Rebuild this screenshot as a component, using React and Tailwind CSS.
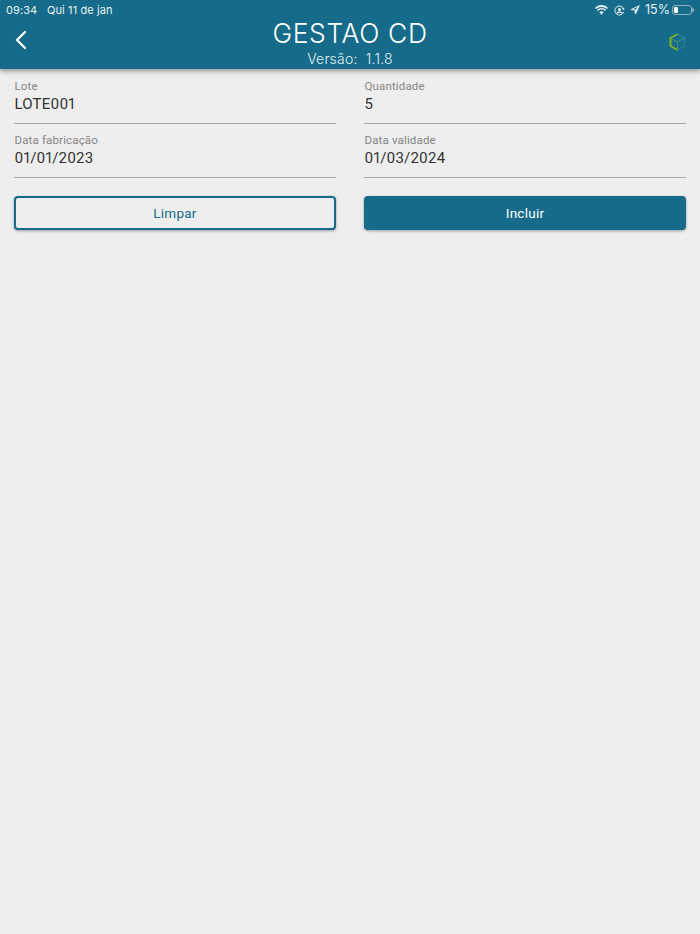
import React from 'react';

const Field = ({ label, value }) => (
  <div className="h-[54px] border-b border-[#a6a6a6] pt-[9px] pl-[0.5px]">
    <p className="text-[11.5px] leading-[14px] tracking-[0.15px] text-[#858585]">{label}</p>
    <p className="text-[15px] leading-[22px] tracking-[0.2px] text-[#333333] proportional-nums">{value}</p>
  </div>
);

const StatusIcons = () => (
  <div className="flex items-center text-[#e8f1f4]">
    <svg width="13" height="10" viewBox="0 0 13 10" fill="currentColor" className="mr-[6px]">
      <path d="M6.5 2C8.6 2 10.5 2.8 11.9 4.1L13 3C11.3 1.2 9 0 6.5 0S1.7 1.2 0 3L1.1 4.1C2.5 2.8 4.4 2 6.5 2Z" />
      <path d="M6.5 4.6C7.8 4.6 9 5.1 9.9 6L11 4.9C9.8 3.7 8.2 3 6.5 3S3.2 3.7 2 4.9L3.1 6C4 5.1 5.2 4.6 6.5 4.6Z" />
      <path d="M6.5 6.2C5.7 6.2 5 6.5 4.3 7.1L6.5 9.7L8.7 7.1C8 6.5 7.3 6.2 6.5 6.2Z" />
    </svg>
    <svg width="11" height="11" viewBox="0 0 11 11" fill="none" stroke="currentColor" className="mr-[5px]">
      <path d="M9.7 6.8A4.5 4.5 0 1 1 9.7 4.2" strokeWidth="1" />
      <path d="M10.5 2.5L9.8 5L7.8 3.8Z" fill="currentColor" stroke="none" />
      <circle cx="5.5" cy="4.5" r="1.5" fill="currentColor" stroke="none" />
      <path d="M2.8 8.2C3.4 6.8 7.6 6.8 8.2 8.2" strokeWidth="1.2" />
    </svg>
    <svg width="10" height="10" viewBox="0 0 10 10" fill="none" stroke="currentColor" strokeWidth="1" className="mr-[5px]">
      <path d="M9.2 0.8L1 4.6L5 5L5.4 9Z" strokeLinejoin="round" />
      <path d="M9.2 0.8L5 5L5.4 9Z" fill="currentColor" stroke="none" />
    </svg>
    <span className="mr-[2px] text-[12.5px] leading-none">15%</span>
    <div className="relative h-[10px] w-[20px] rounded-[3px] border border-[#8fb1bf] p-[1px]">
      <div className="h-full w-[4px] rounded-[1px] bg-white"></div>
      <div className="absolute -right-[3px] top-[2px] h-[4px] w-[2px] rounded-r-sm bg-[#8fb1bf]"></div>
    </div>
  </div>
);

const App = () => {
  return (
    <div className="flex min-h-[934px] flex-col bg-[#eeeeee] font-['Roboto',sans-serif]">
      <header className="h-[69px] bg-[#156b89] shadow-[0_2px_5px_rgba(0,0,0,0.4)]">
        <div className="flex h-[20px] items-center justify-between pl-[6px] pr-[8px] font-['Inter',sans-serif] text-[#e8f1f4]">
          <div className="flex items-center text-[11px] tracking-[0.1px]">
            <span className="w-[41px]">09:34</span>
            <span>Qui 11 de jan</span>
          </div>
          <StatusIcons />
        </div>

        <div className="grid grid-cols-[1fr_auto_1fr] items-start">
          <div className="pl-[14px] pt-[10px]">
            <svg width="13" height="20" viewBox="0 0 13 20" fill="none" stroke="white" strokeWidth="2.2">
              <path d="M11 2L3 10L11 18" strokeLinecap="round" strokeLinejoin="round" />
            </svg>
          </div>
          <div className="-mt-[3px] text-center font-['Inter',sans-serif] text-white">
            <h1 className="text-[26.5px] font-[350] leading-[32px] tracking-[0.6px]">GESTAO CD</h1>
            <p className="text-[14px] font-[350] leading-[20px] tracking-[0.2px] text-[#e4f0f4]">Versão:&nbsp; 1.1.8</p>
          </div>
          <div className="flex justify-end pr-[14px] pt-[13px]">
            <svg width="17" height="18" viewBox="0 0 17 18" fill="none">
              <path d="M8.5 1L15.5 5V13L8.5 17" stroke="#2b7f9c" strokeWidth="1.3" />
              <path d="M8.5 1L1.5 5V13L8.5 17" stroke="#7fb321" strokeWidth="2" />
              <path d="M3 6L8.5 9L15.5 5M8.5 9V16" stroke="#3f8f70" strokeWidth="1.1" />
            </svg>
          </div>
        </div>
      </header>

      <main className="px-[14px] pt-[1px]">
        <div className="grid grid-cols-2 gap-x-[28px]">
          <Field label="Lote" value="LOTE001" />
          <Field label="Quantidade" value="5" />
          <Field label="Data fabricação" value="01/01/2023" />
          <Field label="Data validade" value="01/03/2024" />
        </div>

        <div className="mt-[18px] grid grid-cols-2 gap-x-[28px] text-[13.5px] font-[450] tracking-[0.25px]">
          <button className="h-[34px] rounded-[4px] border-2 border-[#156b89] bg-[#eeeeee] text-[#156b89] shadow-[0_1px_3px_rgba(0,0,0,0.35)]">
            Limpar
          </button>
          <button className="h-[34px] rounded-[4px] bg-[#156b89] text-white shadow-[0_1px_3px_rgba(0,0,0,0.35)]">
            Incluir
          </button>
        </div>
      </main>
    </div>
  );
};

export default App;
